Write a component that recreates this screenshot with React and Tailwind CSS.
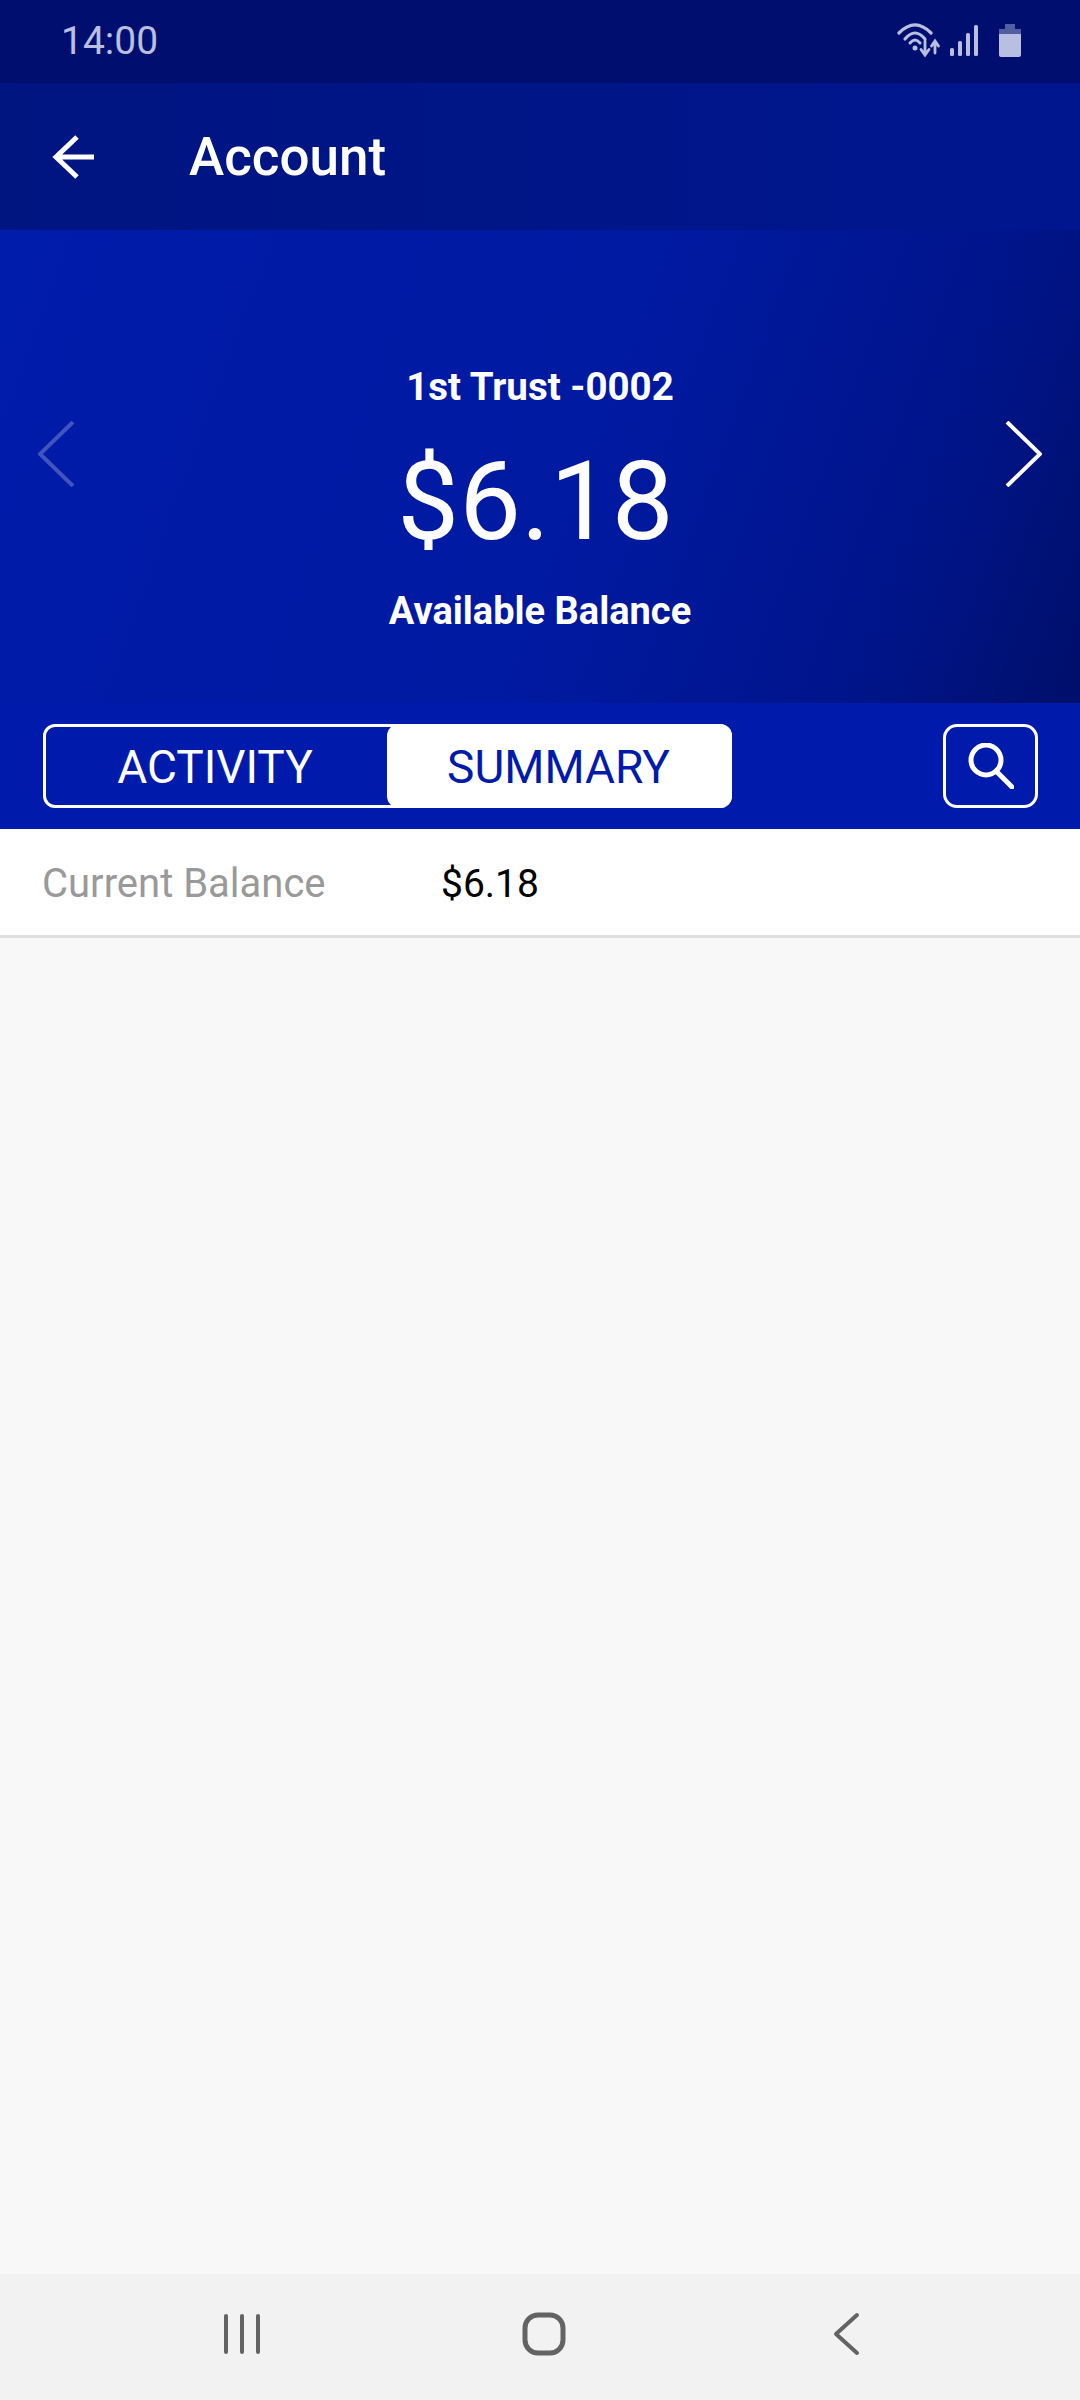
function WifiIcon() {
  return (
    <svg width="44" height="36" viewBox="0 0 44 36" fill="none" stroke="currentColor" strokeLinecap="round">
      <path d="M2 10Q18 -6 34 10" strokeWidth="3.200" />
      <path d="M8 16Q18 4 28 16" strokeWidth="3.200" />
      <path d="M13 20Q18 14 23 20" strokeWidth="3" />
      <circle cx="18" cy="25" r="2.500" fill="currentColor" stroke="none" />
      <path d="M28 18V31M24 26.500L28 32L32 26.500" strokeWidth="2.800" />
      <path d="M38 30V19M34.500 23L38 18L41.500 23" strokeWidth="2.800" />
    </svg>
  );
}

function SignalIcon() {
  return (
    <svg width="28" height="32" viewBox="0 0 28 32" fill="currentColor">
      <rect x="0" y="23" width="4" height="8" rx="1.500" />
      <rect x="8" y="16" width="4" height="15" rx="1.500" />
      <rect x="16" y="8" width="4" height="23" rx="1.500" />
      <rect x="24" y="0" width="4" height="31" rx="1.500" />
    </svg>
  );
}

function BatteryIcon() {
  return (
    <svg width="22" height="33" viewBox="0 0 22 33" fill="currentColor">
      <path d="M6 0H16V5H22V10H0V5H6Z" fillOpacity="0.45" />
      <path d="M0 10H22V31C22 32 21 33 20 33H2C1 33 0 32 0 31Z" />
    </svg>
  );
}

function Chevron({ dir, className }) {
  return (
    <svg className={className} width="37" height="66" viewBox="0 0 37 66" fill="none" stroke="currentColor" strokeWidth="4">
      <path d={dir === "left" ? "M35 1L2 33L35 65" : "M2 1L35 33L2 65"} />
    </svg>
  );
}

export default function App() {
  return (
    <div className="flex h-[2400px] w-[1080px] flex-col bg-[#f8f8f8] font-['Roboto',sans-serif]">
      <div className="flex h-[83px] items-center justify-between bg-[#000f6f] pl-[61px] pr-[59px] text-[#b9bfe0]">
        <span className="text-[39px] leading-none">14:00</span>
        <div className="flex items-center pb-[2px]">
          <WifiIcon />
          <div className="ml-[9px]"><SignalIcon /></div>
          <div className="ml-[21px]"><BatteryIcon /></div>
        </div>
      </div>

      <header className="flex h-[147px] items-center bg-gradient-to-r from-[#001580] to-[#00168f] pl-[51px] text-white">
        <svg width="43" height="46" viewBox="0 0 43 46" fill="none" stroke="currentColor" strokeWidth="5">
          <path d="M43 23H5M26 3L5 23L26 43" />
        </svg>
        <h1 className="ml-[95px] pt-[2px] text-[53px] font-medium leading-none">Account</h1>
      </header>

      <section className="flex h-[473px] items-center justify-between bg-[linear-gradient(110deg,#001cab_0%,#0019a0_55%,#00148a_82%,#000f6a_100%)] px-[38px] text-white">
        <Chevron dir="left" className="mb-[26px] text-white/25" />
        <div className="flex flex-col items-center pt-[65px]">
          <p className="text-[38.500px] font-bold leading-[44px]">1st Trust -0002</p>
          <p className="mt-[33px] pr-[9px] text-[110px] leading-[120px]">$6.18</p>
          <p className="mt-[27px] text-[38px] font-bold leading-[44px]">Available Balance</p>
        </div>
        <Chevron dir="right" className="mb-[26px]" />
      </section>

      <div className="flex h-[126px] items-center justify-between bg-[#001bab] pl-[43px] pr-[42px]">
        <div className="flex h-[84px] w-[689px] rounded-[12px] border-[3px] border-white text-[46px]">
          <button className="w-[341px] pt-[3px] pr-[3px] text-white">ACTIVITY</button>
          <button className="-my-[3px] -mr-[3px] flex-1 rounded-[12px] bg-white pt-[3px] pr-[2px] text-[#001bab]">SUMMARY</button>
        </div>
        <button className="flex h-[84px] w-[95px] items-center justify-center rounded-[14px] border-[3px] border-white text-white">
          <svg width="46" height="46" viewBox="0 0 46 46" fill="none" stroke="currentColor" strokeWidth="5">
            <circle cx="18" cy="17" r="15" />
            <path d="M28 28L44 44" strokeLinecap="round" />
          </svg>
        </button>
      </div>

      <div className="flex h-[109px] items-center border-b-[3px] border-[#dfdfdf] bg-white pl-[42px] pt-[4px] text-[40px]">
        <span className="w-[399px] text-[#999999]">Current Balance</span>
        <span className="text-[39px] text-black">$6.18</span>
      </div>

      <div className="flex-1" />

      <nav className="flex h-[126px] items-center bg-[#f2f2f2] pb-[6px] text-[#636363]">
        <svg className="ml-[222px]" width="40" height="42" viewBox="0 0 40 42" fill="currentColor">
          <rect x="2" y="1" width="4" height="40" rx="2" />
          <rect x="18" y="1" width="4" height="40" rx="2" />
          <rect x="34" y="1" width="4" height="40" rx="2" />
        </svg>
        <svg className="ml-[260px]" width="44" height="44" viewBox="0 0 44 44" fill="none" stroke="currentColor" strokeWidth="5">
          <rect x="3" y="3" width="38" height="38" rx="13" />
        </svg>
        <svg className="ml-[267px]" width="27" height="44" viewBox="0 0 27 44" fill="none" stroke="currentColor" strokeWidth="4" strokeLinecap="round" strokeLinejoin="round">
          <path d="M24 3L3 22L24 41" />
        </svg>
      </nav>
    </div>
  );
}
